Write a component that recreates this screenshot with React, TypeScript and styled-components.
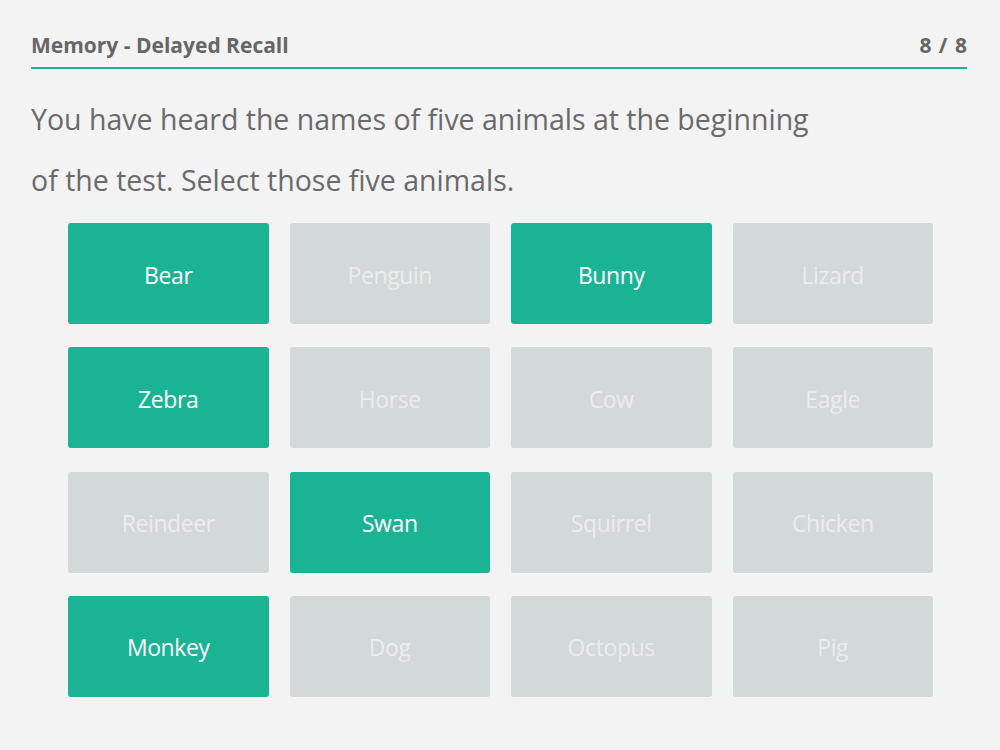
import React from "react";
import styled, { createGlobalStyle } from "styled-components";

const GlobalStyle = createGlobalStyle`
  html, body {
    margin: 0;
    padding: 0;
    background: #f3f3f3;
  }
  body {
    font-family: "Open Sans", "Noto Sans", sans-serif;
  }
`;

const Page = styled.div`
  width: 1000px;
  height: 750px;
  box-sizing: border-box;
  padding: 0 33px 0 31px;
  background: #f3f3f3;
`;

const Header = styled.header`
  display: flex;
  justify-content: space-between;
  align-items: center;
  height: 69px;
  padding-top: 23px;
  box-sizing: border-box;
  border-bottom: 2px solid #1ab394;
  font-size: 21px;
  font-weight: 700;
  color: #666666;
`;

const Title = styled.span``;

const Counter = styled.span`
  word-spacing: 2px;
`;

const Question = styled.p`
  margin: 20px 0 0;
  font-size: 28.5px;
  line-height: 61px;
  color: #6a6a6a;
  font-weight: 400;
`;

const Grid = styled.div`
  display: grid;
  grid-template-columns: repeat(4, 1fr);
  grid-auto-rows: 101px;
  column-gap: 21px;
  row-gap: 23.33px;
  width: 865px;
  margin: 12px 0 0 37px;
`;

const Card = styled.button<{ $selected: boolean }>`
  display: flex;
  align-items: center;
  justify-content: center;
  border: none;
  border-radius: 3px;
  padding: 2px 0 0;
  font-family: inherit;
  font-size: 23px;
  letter-spacing: -0.4px;
  font-weight: 400;
  background: ${(p) => (p.$selected ? "#1ab394" : "#d2d9d8")};
  color: ${(p) => (p.$selected ? "#ffffff" : "#eaeeee")};
  cursor: pointer;
`;

const animals: { name: string; selected: boolean }[] = [
  { name: "Bear", selected: true },
  { name: "Penguin", selected: false },
  { name: "Bunny", selected: true },
  { name: "Lizard", selected: false },
  { name: "Zebra", selected: true },
  { name: "Horse", selected: false },
  { name: "Cow", selected: false },
  { name: "Eagle", selected: false },
  { name: "Reindeer", selected: false },
  { name: "Swan", selected: true },
  { name: "Squirrel", selected: false },
  { name: "Chicken", selected: false },
  { name: "Monkey", selected: true },
  { name: "Dog", selected: false },
  { name: "Octopus", selected: false },
  { name: "Pig", selected: false },
];

export default function App() {
  return (
    <>
      <GlobalStyle />
      <Page>
        <Header>
          <Title>Memory - Delayed Recall</Title>
          <Counter>8 / 8</Counter>
        </Header>
        <Question>
          You have heard the names of five animals at the beginning
          <br />
          of the test. Select those five animals.
        </Question>
        <Grid>
          {animals.map((a) => (
            <Card key={a.name} $selected={a.selected}>
              {a.name}
            </Card>
          ))}
        </Grid>
      </Page>
    </>
  );
}
